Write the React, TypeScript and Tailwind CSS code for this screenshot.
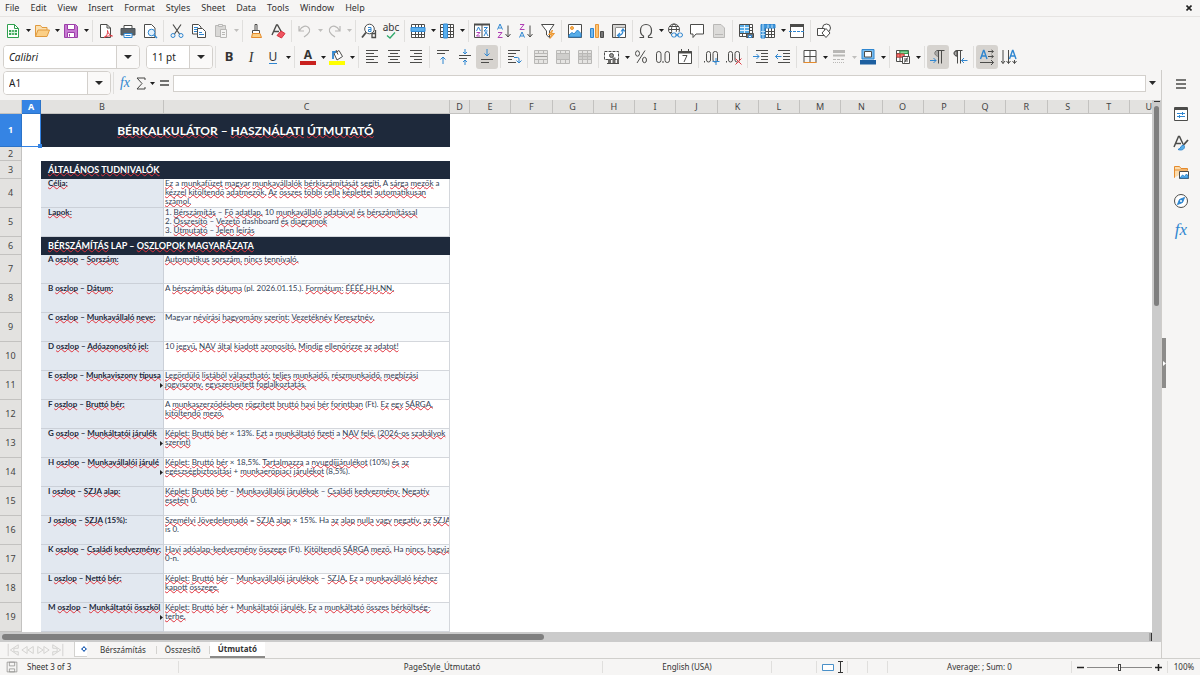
import React, { Fragment, ReactNode } from "react";

const INK = "#4c4c4a";
const BLUE = "#2f86d0";
const PURPLE = "#b03fb5";
const GREY = "#b9b8b6";

function Svg({ children, stroke = INK, size = 16 }: { children: ReactNode; stroke?: string; size?: number }) {
  return (
    <svg width={size} height={size} viewBox="0 0 16 16" fill="none" stroke={stroke} strokeWidth="1" aria-hidden="true" className="shrink-0">
      {children}
    </svg>
  );
}

const icons: Record<string, ReactNode> = {
  newDoc: (
    <Svg stroke="#2fa04e">
      <path d="M2.500 1.500h7l4 4v9h-11z" fill="#fff" />
      <path d="M9.500 1.500v4h4" />
      <path d="M4 7h8v5H4z" fill="#3aa757" stroke="none" />
      <path d="M4 9.500h8M6.700 7v5M9.300 7v5" stroke="#d9f2df" />
    </Svg>
  ),
  open: (
    <Svg stroke="#e09a3e">
      <path d="M1.500 13.500v-11h5l1.500 2h5v2.500" fill="#fbe0b0" />
      <path d="M1.500 13.500l2.500-6.500h11.500l-2.500 6.500z" fill="#fbcf86" />
    </Svg>
  ),
  save: (
    <Svg stroke="#9c3fa8">
      <path d="M1.500 1.500h11l2 2v11h-13z" fill="#c779d2" />
      <path d="M4.500 1.500h7v5h-7z" fill="#fff" />
      <path d="M4.500 9.500h7v5h-7z" fill="#fff" />
      <path d="M6.500 11v2.500" />
    </Svg>
  ),
  pdf: (
    <Svg>
      <path d="M2.500 1.500h6.500l3.500 3.500v9.500h-10z" fill="#fff" />
      <path d="M9 1.500v3.500h3.500" />
      <path d="M6 14.500c3-1.500 4-4.500 3.500-7 .5 3 2.500 5 5 5.500-3-.5-5.500 0-8.500 1.500z" stroke="#e23b45" />
    </Svg>
  ),
  print: (
    <Svg>
      <path d="M4 2.500h8v3H4z" fill="#fff" />
      <path d="M1 5.500h14v6.500H1z" fill="#5a6268" stroke="#4b5257" />
      <path d="M4 10.500h8v4H4z" fill="#fff" stroke={BLUE} />
      <path d="M5.500 12.500h5" stroke={BLUE} />
    </Svg>
  ),
  preview: (
    <Svg>
      <path d="M2.500 1.500h7l3.500 3.500v9.500h-10.500z" fill="#fff" />
      <circle cx="9.500" cy="9.500" r="3.300" fill="#e3f1fc" stroke={BLUE} />
      <path d="M12 12l3 3" stroke={BLUE} strokeWidth="1.400" />
    </Svg>
  ),
  cut: (
    <Svg>
      <path d="M4 1.500l6.500 9.500M12 1.500L5.500 11" strokeWidth="1.200" />
      <circle cx="4" cy="12.500" r="2" stroke={BLUE} />
      <circle cx="12" cy="12.500" r="2" stroke={BLUE} />
    </Svg>
  ),
  copy: (
    <Svg>
      <path d="M1.500 1.500h6l2.500 2.500v7h-8.500z" fill="#fff" />
      <path d="M6.500 5.500h5l3 3v6h-8z" fill="#fff" />
      <path d="M3 4.500h4M3 6.500h3M3 8.500h3M8 9.500h3M8 11.500h5" stroke={BLUE} />
    </Svg>
  ),
  paste: (
    <Svg stroke={GREY}>
      <path d="M2.500 2.500h10v11h-10z" fill="#d9d8d6" />
      <path d="M5.500 1.500h4v2h-4z" fill="#eee" />
      <path d="M7.500 6.500h6v8h-6z" fill="#f5f5f4" />
      <path d="M9 9.500h3M9 11.500h3" />
    </Svg>
  ),
  clone: (
    <Svg>
      <path d="M7 1.500h2v6H7z" />
      <path d="M4.500 7.500h7v3h-7z" fill="#fff" />
      <path d="M4.500 10.500l-1 4h10l-1.500-4z" fill="#fbcf86" stroke="#e58b2c" />
    </Svg>
  ),
  clear: (
    <Svg>
      <path d="M2 12L6.500 2h1L12 10M4 8.500h5" strokeWidth="1.400" />
      <path d="M7 12.500l4-4.500 4 2.500-3.500 4.500z" fill="#ef5661" stroke="#d8323f" />
    </Svg>
  ),
  undo: (
    <Svg stroke={GREY}>
      <path d="M2 3v5h5M2.500 7.500C5 3 9 2 11.500 4.500s1.500 5.500-4.500 9.500" strokeWidth="1.200" />
    </Svg>
  ),
  redo: (
    <Svg stroke={GREY}>
      <path d="M14 3v5H9M13.500 7.500C11 3 7 2 4.500 4.500s-1.500 5.500 4.500 9.500" strokeWidth="1.200" />
    </Svg>
  ),
  find: (
    <Svg>
      <circle cx="8.500" cy="6" r="4.800" fill="#fff" />
      <path d="M5 9.500L1 14.500" strokeWidth="1.800" />
      <path d="M7 4.500h3v4H7.500v-2H10" stroke={BLUE} />
      <path d="M14.500 7v7.500h-3.500v-4h3.500" strokeWidth="1.300" />
    </Svg>
  ),
  rowOp: (
    <Svg>
      <path d="M1.500 1.500h13v13h-13zM1.500 8.500h13M1.500 11.500h13M5.500 1.500v13M8.500 1.500v13M11.500 1.500v13" fill="#fff" />
      <path d="M1 4.500h14v4H1z" fill="#5ab0ee" stroke={BLUE} />
    </Svg>
  ),
  colOp: (
    <Svg>
      <path d="M1.500 1.500h13v13h-13zM1.500 4.500h13M1.500 8.500h13M1.500 11.500h13M11.500 1.500v13" fill="#fff" />
      <path d="M4.500 1v14h4V1z" fill="#5ab0ee" stroke={BLUE} />
    </Svg>
  ),
  sort: (
    <Svg>
      <path d="M.5 1.500h15v13H.5zM8 1.500v13" fill="#fff" />
      <path d="M0 1.500h16" strokeWidth="2" />
      <path d="M2.500 8L4.500 4l2 4M10 4.500h3.500L10 8h3.500" stroke={BLUE} />
      <path d="M2.500 9.500H6L2.500 13H6" stroke={PURPLE} />
      <path d="M10 13l2-4 2 4" stroke={BLUE} />
    </Svg>
  ),
  sortAsc: (
    <Svg>
      <path d="M1.500 6.500L4 1l2.500 5.500M2.500 5h3" stroke={BLUE} />
      <path d="M2 9.500h4L2 14.500h4.500" stroke={PURPLE} />
      <path d="M12 2.500v11M9.500 11l2.500 3 2.500-3" />
    </Svg>
  ),
  sortDesc: (
    <Svg>
      <path d="M2 1.500h4L2 6.500h4.500" stroke={PURPLE} />
      <path d="M1.500 14.500L4 9l2.500 5.500M2.500 13h3" stroke={BLUE} />
      <path d="M12 2.500v11M9.500 11l2.500 3 2.500-3" />
    </Svg>
  ),
  filter: (
    <Svg>
      <path d="M1.500 1.500h12.500L9.500 8v6.500L6.500 12V8z" fill="#fff" />
      <path d="M12.500 7L8.500 11.500h3l-1.500 4 4.500-5h-3z" fill="#fbb653" stroke="#e99535" />
    </Svg>
  ),
  image: (
    <Svg>
      <path d="M1.500 1.500h13v13h-13z" fill="#fff" />
      <circle cx="5" cy="5" r="1.500" fill="#fbb653" stroke="#e99535" />
      <path d="M2 14v-2l3-2.500 2 1.500 3.500-4L14 10.500V14z" fill="#58aee8" stroke={BLUE} />
    </Svg>
  ),
  chart: (
    <Svg>
      <path d="M1.500 5.500h3v9h-3z" fill="#73b9ee" stroke={BLUE} />
      <path d="M6.500 1.500h3v13h-3z" fill="#fbc476" stroke="#e99535" />
      <path d="M11.500 8.500h3v6h-3z" fill="#777" />
    </Svg>
  ),
  pivot: (
    <Svg>
      <path d="M1.500 1.500h13v13h-13zM1.500 4.500h13M4.500 1.500v13" fill="#fff" />
      <path d="M2 2h12v2.500H4.500V14H2z" fill="#d6d5d3" stroke="none" />
      <path d="M7 12.500c3 0 5-2 5-5.500M10 8.500L12 6l2 2.500M9 10l-2.500 2.500L9 14.500" stroke={BLUE} strokeWidth="1.200" />
    </Svg>
  ),
  omega: (
    <Svg>
      <path d="M1.500 14.500h4v-1.500C3.500 12 2.500 9.500 2.500 7.500 2.500 4 4.800 1.500 8 1.500s5.500 2.500 5.500 6c0 2-1 4.500-3 5.500v1.500h4" strokeWidth="1.200" />
    </Svg>
  ),
  link: (
    <Svg>
      <circle cx="7" cy="6.500" r="5.500" fill="#fff" />
      <ellipse cx="7" cy="6.500" rx="2.500" ry="5.500" />
      <path d="M1.500 6.500h11M2.500 3.500h9M2.500 9.500h9" />
      <path d="M5 9h10v6H5z" fill="#f6f5f4" stroke="none" />
      <rect x="4.500" y="10" width="5" height="4" rx="2" stroke={BLUE} />
      <rect x="10.500" y="10" width="5" height="4" rx="2" stroke={BLUE} />
      <path d="M8 12h4" stroke={BLUE} />
    </Svg>
  ),
  comment: (
    <Svg>
      <path d="M1.500 1.500h13v9.500H7l-3 3.500V11H1.500z" fill="#fff" />
    </Svg>
  ),
  header: (
    <Svg stroke={GREY}>
      <path d="M2.500 1.500h7.500l3.500 3.500v9.500h-11z" fill="#dcdbd9" />
      <path d="M4 11.500h8" />
    </Svg>
  ),
  printArea: (
    <Svg>
      <path d="M1.500 1.500h13v12h-13zM1.500 4.500h13M1.500 7.500h13M1.500 10.500h13M4.500 1.500v12M11.500 1.500v12" fill="#fff" />
      <path d="M2 2h9v8H2z" fill="#58aee8" stroke="none" />
      <path d="M2 4.500h9M2 7.500h9M6.500 2v8" stroke="#e3f1fc" />
      <path d="M8.500 10.500h7v4h-7z" fill="#64707a" />
      <path d="M10.500 12.500h3v2h-3z" fill="#fff" stroke={BLUE} />
    </Svg>
  ),
  freeze: (
    <Svg>
      <path d="M1.500 1.500h13v13h-13zM5.500 1.500v13M8.500 5v9.500M11.500 5v9.500M5 8.500h10M5 11.500h10" fill="#fff" />
      <path d="M1 1.500h14v3.500H5v10H1z" fill="#3f97dc" stroke={BLUE} />
      <path d="M3 1v14M8 1.500V5M12 1.500V5M1 8.500h4M1 11.500h4" stroke="#bfe0f7" />
    </Svg>
  ),
  split: (
    <Svg>
      <path d="M1.500 2.500h13v12h-13z" fill="#fff" />
      <path d="M1 2.500h14" strokeWidth="3" />
      <path d="M0 8.500h16" stroke={BLUE} strokeDasharray="3 1" />
    </Svg>
  ),
  shapes: (
    <Svg>
      <circle cx="10.500" cy="5" r="4" fill="#fff" />
      <path d="M1.500 5.500h7v7h-7z" fill="#fff" />
      <path d="M10 5.500l4 4.500-4 4.500L6 10z" fill="#fff" />
    </Svg>
  ),
  alignLeft: (
    <Svg>
      <path d="M2 1.500h12M2 4.500h8M2 7.500h12M2 10.500h8M2 13.500h12" />
    </Svg>
  ),
  alignCenter: (
    <Svg>
      <path d="M2 1.500h12M4 4.500h8M2 7.500h12M4 10.500h8M2 13.500h12" />
    </Svg>
  ),
  alignRight: (
    <Svg>
      <path d="M2 1.500h12M6 4.500h8M2 7.500h12M6 10.500h8M2 13.500h12" />
    </Svg>
  ),
  vTop: (
    <Svg>
      <path d="M2 1.500h12M2 4.500h8" />
      <path d="M8 15V8M5.500 10.500L8 8l2.500 2.500" stroke={BLUE} />
    </Svg>
  ),
  vMid: (
    <Svg>
      <path d="M2 6.500h12M2 9.500h8" />
      <path d="M8 0v5M6 3l2 2 2-2M8 16v-5M6 13l2-2 2 2" stroke={BLUE} />
    </Svg>
  ),
  vBottom: (
    <Svg>
      <path d="M2 10.500h12M2 13.500h8" />
      <path d="M8 0v7M5.500 4.500L8 7l2.500-2.500" stroke={BLUE} />
    </Svg>
  ),
  wrap: (
    <Svg>
      <path d="M2 1.500h12M2 4.500h8M2 7.500h6M2 10.500h4M2 13.500h8" />
      <path d="M8 8.500h3.500q1.500 0 1.500 1.500v4M10.500 11.500l2.500 2.500 2.500-2.500" stroke={BLUE} />
    </Svg>
  ),
  merge: (
    <Svg stroke={GREY}>
      <path d="M1.500 1.500h13v13h-13zM1.500 4.500h13M1.500 10.500h13M5.500 1.500v3M10.500 1.500v3M5.500 10.500v4M10.500 10.500v4" fill="#e6e5e3" />
      <path d="M2 7.500h12" stroke="#9f9e9c" />
    </Svg>
  ),
  mergeCells: (
    <Svg stroke={GREY}>
      <path d="M1.500 1.500h13v13h-13zM5.500 1.500v3M10.500 1.500v3M5.500 10.500v4M10.500 10.500v4" fill="#e6e5e3" />
      <path d="M1.500 4.500h13v6h-13z" fill="#cfcecc" />
    </Svg>
  ),
  unmerge: (
    <Svg stroke={GREY}>
      <path d="M1.500 1.500h13v13h-13zM5.500 1.500v13M10.500 1.500v13" fill="#e6e5e3" />
      <path d="M1.500 4.500h13v6h-13zM5.500 4.500v6M10.500 4.500v6M2 7.500h12" fill="#cfcecc" />
    </Svg>
  ),
  currency: (
    <Svg>
      <path d="M.5 2.500h14v8H.5z" fill="#fff" strokeDasharray="3 1" />
      <circle cx="7.500" cy="6.500" r="2" fill="#9b9a98" />
      <path d="M4 10h3v4H4zM8.500 8.500h3V14h-3zM13 10h2v4h-2z" fill="#6b6a68" stroke="none" />
      <path d="M3 14.500h12" />
    </Svg>
  ),
  percent: (
    <Svg>
      <ellipse cx="4.500" cy="4.500" rx="2" ry="2.700" />
      <ellipse cx="11.500" cy="11" rx="2" ry="2.700" />
      <path d="M12 1.500L4 14" />
    </Svg>
  ),
  number: (
    <Svg>
      <rect x="1.500" y="2.500" width="4.500" height="11" rx="2.250" />
      <rect x="10" y="2.500" width="4.500" height="11" rx="2.250" />
      <path d="M8 12v2" />
    </Svg>
  ),
  date: (
    <Svg>
      <path d="M1.500 2.500h13v12h-13z" fill="#fff" />
      <path d="M1 3.500h14" strokeWidth="2" />
      <path d="M4.500 0v3M11.500 0v3M5.500 6.500h4.500L7 13" />
    </Svg>
  ),
  addDec: (
    <Svg>
      <path d="M.5 12v1.500" />
      <rect x="2.500" y="2.500" width="4" height="10.500" rx="2" />
      <rect x="9" y="2.500" width="4.500" height="10.500" rx="2" />
      <path d="M8.500 12.500h7M12 9v7" stroke={BLUE} />
    </Svg>
  ),
  delDec: (
    <Svg>
      <path d="M.5 12v1.500" />
      <rect x="2.500" y="2.500" width="4" height="10.500" rx="2" />
      <rect x="9" y="2.500" width="4.500" height="10.500" rx="2" />
      <path d="M9.500 9.500l6 6M15.500 9.500l-6 6" stroke="#e23b45" />
    </Svg>
  ),
  indent: (
    <Svg>
      <path d="M3 1.500h12M8 4.500h7M8 7.500h7M8 10.500h7M3 13.500h12" />
      <path d="M0 7.500h6M3.500 5L6 7.500 3.500 10" stroke={BLUE} />
    </Svg>
  ),
  outdent: (
    <Svg>
      <path d="M3 1.500h12M8 4.500h7M8 7.500h7M8 10.500h7M3 13.500h12" />
      <path d="M6.500 7.500h-6M3 5L.5 7.500 3 10" stroke={BLUE} />
    </Svg>
  ),
  borders: (
    <Svg>
      <path d="M2 1.500h12v6H2zM8 1.500v12M2 7.500v6M14 7.500v6" fill="#fff" />
      <path d="M1.500 13.500h13" stroke="#e58b2c" />
    </Svg>
  ),
  borderStyle: (
    <Svg stroke={GREY}>
      <path d="M2 2.500h12" strokeWidth="3" />
      <path d="M2 6.500h12" strokeWidth="2" />
      <path d="M2 10.500h12" strokeDasharray="3 1" />
      <path d="M2 13.500h12" strokeDasharray="1 1" />
    </Svg>
  ),
  borderColor: (
    <Svg>
      <path d="M2 .5h12v9.500H2z" fill="#79bdf0" stroke={BLUE} />
      <path d="M4.500 2.500h7v5.500h-7z" fill="#fff" />
      <path d="M0 11h16v4.500H0z" fill="#1d5fa0" stroke="none" />
    </Svg>
  ),
  conditional: (
    <Svg>
      <path d="M1.500 1.500h12v11h-12zM5 1.500v11M9 1.500v11M1.500 4.500h12M1.500 8h12" fill="#fff" />
      <path d="M5 2h8v2.500H5z" fill="#8ed49e" stroke="#2fa04e" />
      <path d="M2 5h3v3H2zM5 5h4v3H5z" fill="#f3837f" stroke="#d8423f" />
      <path d="M7.500 7.500h7v7h-7z" fill="#fff" />
      <path d="M9 10h4M9 12h4M12.500 8.500l-3 5" />
    </Svg>
  ),
  ltr: (
    <Svg>
      <path d="M14.500 1.500H8C4 1.500 4 7 8 7M8.500 1.500v13M11.500 1.500v13" />
      <path d="M8 2v5C4.500 7 4.500 2 8 2z" fill="#aaa9a7" stroke="none" />
      <path d="M0 11.500h6M3.500 9L6 11.500 3.500 14" stroke={BLUE} />
    </Svg>
  ),
  rtl: (
    <Svg>
      <path d="M10.500 1.500H5C1 1.500 1 7 5 7M5.500 1.500v13M8.500 1.500v13" />
      <path d="M5 2v5C1.500 7 1.500 2 5 2z" fill="#aaa9a7" />
      <path d="M15.500 11.500h-6M12 9l-2.500 2.500L12 14" stroke={BLUE} />
    </Svg>
  ),
  textLtr: (
    <Svg>
      <path d="M1.500 10L4.500 1.500h.5L8 10M2.500 7h4.500" stroke={BLUE} strokeWidth="1.400" />
      <path d="M9 2.500h5M12.500 1l2 1.500-2 1.500M9 7.500h5M12.500 6l2 1.500-2 1.500M1 13.500h13.500M12 11l2.500 2.500L12 16" />
    </Svg>
  ),
  textTtb: (
    <Svg>
      <path d="M8.500 10l3-8.500h.5L15 10M9.500 7H14" stroke={BLUE} strokeWidth="1.400" />
      <path d="M2 1v13.500M0 12l2 2.500L4 12M7.500 1v13.500M5.500 12l2 2.500 2-2.500M13.500 11v3.500M11.500 12l2 2.500 2-2.500" />
    </Svg>
  ),
};

function Btn({ label, active, disabled, children }: { label: string; active?: boolean; disabled?: boolean; children: ReactNode }) {
  return (
    <button
      type="button"
      aria-label={label}
      disabled={disabled}
      className={
        active
          ? "flex h-6 w-[22px] shrink-0 items-center justify-center rounded-[3px] bg-[#d6d3cf]"
          : "flex h-6 w-[22px] shrink-0 items-center justify-center"
      }
    >
      {children}
    </button>
  );
}

function Caret({ muted }: { muted?: boolean }) {
  return (
    <svg width="5" height="3" viewBox="0 0 5 3" aria-hidden="true" className="shrink-0">
      <path d="M0 0h5L2.500 3z" fill={muted ? "#c0bfbd" : "#1e1e1e"} />
    </svg>
  );
}

function Drop({ label, muted }: { label: string; muted?: boolean }) {
  return (
    <button type="button" aria-label={label + " options"} disabled={muted} className="flex h-6 w-[7px] shrink-0 items-center justify-end">
      <Caret muted={muted} />
    </button>
  );
}

function Sep({ wide }: { wide?: boolean }) {
  return (
    <span className={wide ? "flex h-[22px] w-[6px] shrink-0 justify-center" : "flex h-[22px] w-[5px] shrink-0 justify-center"}>
      <span className="w-px bg-[#e0dfdd]" />
    </span>
  );
}

type Tool = { id: string; label: string; drop?: boolean; off?: boolean; on?: boolean };
const t = (id: string, label: string, flags = ""): Tool => ({
  id,
  label,
  drop: flags.includes("v"),
  off: flags.includes("x"),
  on: flags.includes("a"),
});

const standardBar: Tool[][] = [
  [t("newDoc", "New", "v"), t("open", "Open", "v"), t("save", "Save", "v")],
  [t("pdf", "Export as PDF"), t("print", "Print"), t("preview", "Print Preview")],
  [t("cut", "Cut"), t("copy", "Copy"), t("paste", "Paste", "vx")],
  [t("clone", "Clone Formatting"), t("clear", "Clear Formatting")],
  [t("undo", "Undo", "vx"), t("redo", "Redo", "vx")],
  [t("find", "Find and Replace"), t("spell", "Spelling")],
  [t("rowOp", "Row", "v"), t("colOp", "Column", "v")],
  [t("sort", "Sort"), t("sortAsc", "Sort Ascending"), t("sortDesc", "Sort Descending"), t("filter", "AutoFilter")],
  [t("image", "Insert Image"), t("chart", "Insert Chart"), t("pivot", "Pivot Table")],
  [t("omega", "Special Character", "v"), t("link", "Hyperlink"), t("comment", "Comment"), t("header", "Headers and Footers", "x")],
  [t("printArea", "Print Area"), t("freeze", "Freeze Rows and Columns", "v"), t("split", "Split Window")],
  [t("shapes", "Show Draw Functions")],
];

const formatBar: Tool[][] = [
  [t("bold", "Bold"), t("italic", "Italic"), t("underline", "Underline", "v")],
  [t("fontColor", "Font Color", "v"), t("fill", "Background Color", "v")],
  [t("alignLeft", "Align Left"), t("alignCenter", "Align Center"), t("alignRight", "Align Right")],
  [t("vTop", "Align Top"), t("vMid", "Center Vertically"), t("vBottom", "Align Bottom", "a")],
  [t("wrap", "Wrap Text")],
  [t("merge", "Merge and Center", "x"), t("mergeCells", "Merge Cells", "x"), t("unmerge", "Unmerge Cells", "x")],
  [t("currency", "Currency", "v"), t("percent", "Percent"), t("number", "Number"), t("date", "Date")],
  [t("addDec", "Add Decimal Place"), t("delDec", "Delete Decimal Place")],
  [t("indent", "Increase Indent"), t("outdent", "Decrease Indent")],
  [t("borders", "Borders", "v"), t("borderStyle", "Border Style", "vx"), t("borderColor", "Border Color", "v")],
  [t("conditional", "Conditional", "v")],
  [t("ltr", "Left-To-Right", "a"), t("rtl", "Right-To-Left")],
  [t("textLtr", "Text left to right", "a"), t("textTtb", "Text top to bottom")],
];

function Glyph({ id }: { id: string }) {
  switch (id) {
    case "bold":
      return <span className="text-[13px] font-bold text-[#333]">B</span>;
    case "italic":
      return <span className="font-['Liberation_Serif',serif] text-[14px] italic text-[#333]">I</span>;
    case "underline":
      return <span className="border-b border-[#2f86d0] text-[12px] leading-[13px] text-[#333]">U</span>;
    case "spell":
      return (
        <span className="flex flex-col items-center">
          <span className="text-[10px] leading-[9px] text-[#333]">abc</span>
          <svg width="10" height="7" viewBox="0 0 10 7" fill="none" stroke="#2fa96b" strokeWidth="1.300" aria-hidden="true">
            <path d="M1 3.500L4 6l5-5.500" />
          </svg>
        </span>
      );
    case "fontColor":
      return (
        <span className="flex flex-col items-center">
          <span className="text-[12px] font-bold leading-3 text-[#333]">A</span>
          <span className="h-1 w-4 bg-[#c9211e]" />
        </span>
      );
    case "fill":
      return (
        <Svg>
          <path d="M5 4.500l5-3 3.500 6-5.500 3.500z" fill="#fff" />
          <path d="M7 1l2 4.500" />
          <path d="M4 10V3h3" stroke={BLUE} strokeWidth="1.800" />
          <path d="M0 12h16v4H0z" fill="#ffff00" stroke="none" />
        </Svg>
      );
    default:
      return <>{icons[id]}</>;
  }
}

function ToolGroups({ groups }: { groups: Tool[][] }) {
  return (
    <>
      {groups.map((group, i) => (
        <Fragment key={i}>
          {i > 0 && <Sep wide={groups[i - 1][groups[i - 1].length - 1].drop} />}
          {group.map((tool) => (
            <Fragment key={tool.id}>
              <Btn label={tool.label} active={tool.on} disabled={tool.off}>
                <Glyph id={tool.id} />
              </Btn>
              {tool.drop && <Drop label={tool.label} muted={tool.off} />}
            </Fragment>
          ))}
        </Fragment>
      ))}
    </>
  );
}

function Combo({ id, label, value, box, text }: { id: string; label: string; value: string; box: string; text: string }) {
  return (
    <div className={"flex h-6 shrink-0 overflow-hidden rounded-[4px] border border-[#d3d0cc] bg-white " + box}>
      <input id={id} aria-label={label} defaultValue={value} className={"min-w-0 flex-1 bg-white px-[5px] text-[10px] text-[#222] outline-none " + text} />
      <button type="button" aria-label={label + " list"} className="flex w-[23px] shrink-0 items-center justify-center border-l border-[#d3d0cc] bg-[#faf9f8]">
        <svg width="8" height="4" viewBox="0 0 8 4" aria-hidden="true">
          <path d="M0 0h8L4 4z" fill="#2a2a2a" />
        </svg>
      </button>
    </div>
  );
}

const KNOWN = new Set(["Magyar", "dashboard", "(pl.", "(Ft).", "Ha", "is", "LAP", "0-n."]);

function Spelled({ text }: { text: string }) {
  return (
    <>
      {text.split(" ").map((word, i) => {
        const wrong = /[A-Za-zÀ-ž]{2,}/.test(word) && !KNOWN.has(word);
        return (
          <Fragment key={i}>
            {i > 0 && " "}
            {wrong ? (
              <span className="underline decoration-[#e0323c] decoration-wavy decoration-1 -underline-offset-1 [text-decoration-skip-ink:none]">{word}</span>
            ) : (
              word
            )}
          </Fragment>
        );
      })}
    </>
  );
}

type Row = { n: number; kind: "title" | "gap" | "section" | "data"; b?: string; c?: string[]; cut?: boolean };
const rows: Row[] = [
  { n: 1, kind: "title", b: "BÉRKALKULÁTOR – HASZNÁLATI ÚTMUTATÓ" },
  { n: 2, kind: "gap" },
  { n: 3, kind: "section", b: "ÁLTALÁNOS TUDNIVALÓK" },
  {
    n: 4,
    kind: "data",
    b: "Célja:",
    c: ["Ez a munkafüzet magyar munkavállalók bérkiszámítását segíti. A sárga mezők a", "kézzel kitöltendő adatmezők. Az összes többi cella képlettel automatikusan", "számol."],
  },
  { n: 5, kind: "data", b: "Lapok:", c: ["1. Bérszámítás – Fő adatlap, 10 munkavállaló adataival és bérszámítással", "2. Összesítő – Vezető dashboard és diagramok", "3. Útmutató – Jelen leírás"] },
  { n: 6, kind: "section", b: "BÉRSZÁMÍTÁS LAP – OSZLOPOK MAGYARÁZATA" },
  { n: 7, kind: "data", b: "A oszlop – Sorszám:", c: ["Automatikus sorszám, nincs tennivaló."] },
  { n: 8, kind: "data", b: "B oszlop – Dátum:", c: ["A bérszámítás dátuma (pl. 2026.01.15.). Formátum: ÉÉÉÉ.HH.NN."] },
  { n: 9, kind: "data", b: "C oszlop – Munkavállaló neve:", c: ["Magyar névírási hagyomány szerint: Vezetéknév Keresztnév."] },
  { n: 10, kind: "data", b: "D oszlop – Adóazonosító jel:", c: ["10 jegyű, NAV által kiadott azonosító. Mindig ellenőrizze az adatot!"] },
  { n: 11, kind: "data", cut: true, b: "E oszlop – Munkaviszony típusa", c: ["Legördülő listából választható: teljes munkaidő, részmunkaidő, megbízási", "jogviszony, egyszerűsített foglalkoztatás."] },
  { n: 12, kind: "data", b: "F oszlop – Bruttó bér:", c: ["A munkaszerződésben rögzített bruttó havi bér forintban (Ft). Ez egy SÁRGA,", "kitöltendő mező."] },
  { n: 13, kind: "data", cut: true, b: "G oszlop – Munkáltatói járulék", c: ["Képlet: Bruttó bér × 13%. Ezt a munkáltató fizeti a NAV felé. (2026-os szabályok", "szerint)"] },
  { n: 14, kind: "data", cut: true, b: "H oszlop – Munkavállalói járulé", c: ["Képlet: Bruttó bér × 18,5%. Tartalmazza a nyugdíjjárulékot (10%) és az", "egészségbiztosítási + munkaerőpiaci járulékot (8,5%)."] },
  { n: 15, kind: "data", b: "I oszlop – SZJA alap:", c: ["Képlet: Bruttó bér – Munkavállalói járulékok – Családi kedvezmény. Negatív", "esetén 0."] },
  { n: 16, kind: "data", b: "J oszlop – SZJA (15%):", c: ["Személyi Jövedelemadó = SZJA alap × 15%. Ha az alap nulla vagy negatív, az SZJA", "is 0."] },
  { n: 17, kind: "data", b: "K oszlop – Családi kedvezmény:", c: ["Havi adóalap-kedvezmény összege (Ft). Kitöltendő SÁRGA mező. Ha nincs, hagyja", "0-n."] },
  { n: 18, kind: "data", b: "L oszlop – Nettó bér:", c: ["Képlet: Bruttó bér – Munkavállalói járulékok – SZJA. Ez a munkavállaló kézhez", "kapott összege."] },
  { n: 19, kind: "data", cut: true, b: "M oszlop – Munkáltatói összköl", c: ["Képlet: Bruttó bér + Munkáltatói járulék. Ez a munkáltató összes bérköltség-", "terhe."] },
];

const heights: Record<number, string> = { 1: "h-[33px]", 2: "h-[14px]", 3: "h-[18px]", 6: "h-[18px]" };
const columns = "E F G H I J K L M N O P Q R S T".split(" ");

function HeadCell({ children, className = "" }: { children?: ReactNode; className?: string }) {
  return <th className={"h-[14px] overflow-hidden border-b border-r border-[#c3c2c0] bg-[#e3e2e0] p-0 text-center text-[9px] leading-[13px] font-normal text-[#444] " + className}>{children}</th>;
}

function Sheet() {
  return (
    <table className="w-full table-fixed border-separate border-spacing-0">
      <colgroup>
        <col className="w-[22px]" />
        <col className="w-[19px]" />
        <col className="w-[123px]" />
        <col className="w-[286px]" />
        <col className="w-[20px]" />
        {columns.map((c) => (
          <col key={c} />
        ))}
        <col className="w-[22px]" />
      </colgroup>
      <thead>
        <tr>
          <HeadCell />
          <th className="border-b border-r border-[#2b73c8] bg-[#3584e4] p-0 text-center text-[9px] leading-[13px] font-bold text-white">A</th>
          <HeadCell>B</HeadCell>
          <HeadCell>C</HeadCell>
          <HeadCell>D</HeadCell>
          {columns.map((c) => (
            <HeadCell key={c}>{c}</HeadCell>
          ))}
          <HeadCell className="border-r-0 text-right">U</HeadCell>
        </tr>
      </thead>
      <tbody>
        {rows.map((row) => {
          const height = heights[row.n] ?? "h-[29px]";
          const shade = row.n === 4 || (row.n > 6 && row.n % 2 === 0) ? "bg-white" : "bg-[#f8fafc]";
          return (
            <tr key={row.n} className={height}>
              <th
                className={
                  row.n === 1
                    ? "border-b border-r border-[#2b73c8] bg-[#3584e4] p-0 text-center text-[9px] leading-3 font-bold text-white"
                    : "border-b border-r border-[#c3c2c0] bg-[#e3e2e0] p-0 text-center text-[9px] leading-3 font-normal text-[#444]"
                }
              >
                {row.n}
              </th>
              {row.n === 1 ? (
                <td className="relative border-b border-r border-[#3584e4] bg-white p-0">
                  <span className="absolute -bottom-[2px] -right-[2px] z-10 size-[4px] bg-[#3584e4]" />
                </td>
              ) : (
                <td className="bg-white p-0" />
              )}
              {row.kind === "title" && (
                <td colSpan={2} className="overflow-hidden bg-[#1e293b] p-0 text-center font-['Lato',sans-serif] text-[12px] leading-4 font-bold whitespace-nowrap text-white">
                  <Spelled text={row.b!} />
                </td>
              )}
              {row.kind === "gap" && <td colSpan={2} className="bg-white p-0" />}
              {row.kind === "section" && (
                <td colSpan={2} className="overflow-hidden bg-[#1e293b] p-0 pl-[7px] text-left font-['Lato',sans-serif] text-[9px] leading-4 font-bold whitespace-nowrap text-white">
                  <Spelled text={row.b!} />
                </td>
              )}
              {row.kind === "data" && (
                <>
                  <td className="relative overflow-hidden border-b border-r border-[#cbd0d8] bg-[#e2e8f0] p-0 pl-[7px] align-top font-['Lato',sans-serif] text-[8px] leading-[9px] font-bold whitespace-nowrap text-[#1e293b]">
                    <Spelled text={row.b!} />
                    {row.cut && (
                      <svg width="3" height="5" viewBox="0 0 3 5" aria-hidden="true" className="absolute right-0 bottom-[11px]">
                        <path d="M0 0l3 2.500L0 5z" fill="#222" />
                      </svg>
                    )}
                  </td>
                  <td className={"overflow-hidden border-b border-r border-[#d4d7dc] p-0 pl-px align-top font-['Lato',sans-serif] text-[8px] leading-[9px] whitespace-nowrap text-[#334155] " + shade}>
                    {row.c!.map((line) => (
                      <div key={line}>
                        <Spelled text={line} />
                      </div>
                    ))}
                  </td>
                </>
              )}
              <td colSpan={18} className="bg-white p-0" />
            </tr>
          );
        })}
      </tbody>
    </table>
  );
}

function FxMark({ big }: { big?: boolean }) {
  return (
    <span className={big ? "font-['Liberation_Serif',serif] text-[17px] leading-5 italic text-[#2f86d0]" : "font-['Liberation_Serif',serif] text-[14px] leading-5 italic text-[#2f86d0]"}>
      fx
    </span>
  );
}

function Sidebar() {
  const items: [string, ReactNode][] = [
    ["Sidebar Settings", <Svg key="s"><path d="M3 3h10M3 7h10M3 11h10" strokeWidth="1.500" /></Svg>],
    [
      "Properties",
      <Svg key="p">
        <path d="M1.500 1.500h13v13h-13z" fill="#fff" />
        <path d="M1 3h14" strokeWidth="2" />
        <path d="M4 7.500h8M4 10.500h8M9.500 6v3M6.500 9v3" stroke={BLUE} />
      </Svg>,
    ],
    [
      "Styles",
      <Svg key="y">
        <path d="M1 12L5.500 1.500h1L10 9M3 8.500h5" strokeWidth="1.500" />
        <path d="M15 5l-5 5.500" strokeWidth="1.800" />
        <path d="M10.500 10c-3 0-2 3.500-5.500 4.500 3 1 6.500.5 6.500-3z" fill="#58aee8" stroke={BLUE} />
      </Svg>,
    ],
    [
      "Gallery",
      <Svg key="g">
        <path d="M1.500 13.500v-11h5l1.500 2h6.500v2" fill="#fbdcae" stroke="#e58b2c" />
        <path d="M1.500 13.500V6h13" stroke="#e58b2c" />
        <path d="M6.500 7.500h9v7h-9z" fill="#fff" />
        <path d="M7 14l2.500-3 2 1.500 2-2.500 1.500 2V14z" fill="#58aee8" stroke={BLUE} />
      </Svg>,
    ],
    [
      "Navigator",
      <Svg key="n">
        <circle cx="8" cy="8" r="6.500" fill="#fff" />
        <path d="M11.500 4.500L9.500 9.500l-5 2 2-5z" fill="#2f86d0" stroke={BLUE} />
        <circle cx="8" cy="8" r="1" fill="#fff" stroke="none" />
      </Svg>,
    ],
    ["Functions", <FxMark key="f" big />],
  ];
  return (
    <aside className="flex w-[39px] shrink-0 border-l border-[#cfcdca] bg-[#f6f5f4]">
      <div className="flex w-1 items-start pt-[268px]">
        <span className="flex h-[50px] w-1 items-center justify-center bg-[#8d8c8a]">
          <svg width="3" height="5" viewBox="0 0 3 5" aria-hidden="true">
            <path d="M0 0l3 2.500L0 5z" fill="#fff" />
          </svg>
        </span>
      </div>
      <nav aria-label="Sidebar" className="flex flex-1 flex-col items-center pr-1">
        {items.map(([label, icon]) => (
          <button key={label} type="button" aria-label={label} className="flex h-[29px] w-7 items-center justify-center">
            {icon}
          </button>
        ))}
      </nav>
    </aside>
  );
}

function SheetTabs() {
  return (
    <div className="flex h-4 shrink-0 items-stretch text-[8px] leading-[14px] text-[#333]">
      <div className="flex items-center pl-[5px]">
        {["M2.500 1v14M14 2L5 8l9 6v-4H9V6h5z", "M14 4L8 8l6 4zM7 4L1 8l6 4z", "M2 4l6 4-6 4zM9 4l6 4-6 4z", "M13.500 1v14M2 2l9 6-9 6v-4h5V6H2z"].map((d, i) => (
          <button key={d} type="button" aria-label={["First sheet", "Previous sheet", "Next sheet", "Last sheet"][i]} className="flex w-[15px] justify-center">
            <Svg stroke="#cfcecb" size={14}>
              <path d={d} />
            </Svg>
          </button>
        ))}
      </div>
      <button type="button" aria-label="Add sheet" className="ml-[9px] flex h-[15px] w-[13px] items-center justify-end border border-t-0 border-r-0 border-[#d3d2cf] bg-white">
        <svg width="6" height="6" viewBox="0 0 6 6" fill="none" stroke="#2b67b8" className="shrink-0" aria-hidden="true">
          <path d="M3 0v1.500M3 4.500V6M0 3h1.500M4.500 3H6" />
          <circle cx="3" cy="3" r="1.700" />
        </svg>
      </button>
      <button type="button" className="ml-[3px] px-[10px]">Bérszámítás</button>
      <span className="my-1 w-px bg-[#d3d2cf]" />
      <button type="button" className="px-2">Összesítő</button>
      <span className="my-1 w-px bg-[#d3d2cf]" />
      <button type="button" className="border-b-2 border-[#8b8a88] bg-white px-2 font-bold">Útmutató</button>
    </div>
  );
}

export default function App() {
  return (
    <div className="flex h-screen flex-col overflow-hidden bg-[#f6f5f4] font-['Noto_Sans',sans-serif] text-[#333]">
      <header className="flex h-[17px] shrink-0 items-center border-b border-[#e6e4e2] pr-[6px] pl-[5px]">
        <nav aria-label="Menu" className="flex flex-1 gap-[11px] text-[9px] leading-4">
          {["File", "Edit", "View", "Insert", "Format", "Styles", "Sheet", "Data", "Tools", "Window", "Help"].map((m) => (
            <button key={m} type="button">
              {m}
            </button>
          ))}
        </nav>
        <button type="button" aria-label="Close document" className="flex size-[10px] items-center justify-center">
          <svg width="6" height="6" viewBox="0 0 6 6" stroke="#222" strokeWidth="1.600" aria-hidden="true">
            <path d="M.5.5l5 5M5.500.5l-5 5" />
          </svg>
        </button>
      </header>

      <div role="toolbar" aria-label="Standard" className="flex h-[27px] shrink-0 items-center pl-[2px]">
        <ToolGroups groups={standardBar} />
      </div>

      <div role="toolbar" aria-label="Formatting" className="flex h-[26px] shrink-0 items-center pl-[3px]">
        <Combo id="font-name" label="Font Name" value="Calibri" box="w-[137px]" text="italic" />
        <span className="w-[6px] shrink-0" />
        <Combo id="font-size" label="Font Size" value="11 pt" box="w-[67px]" text="" />
        <Sep />
        <ToolGroups groups={formatBar} />
      </div>

      <div className="flex min-h-0 flex-1">
        <main className="flex min-w-0 flex-1 flex-col">
          <div className="flex h-[30px] shrink-0 items-center pr-[3px] pb-1 pl-[3px]">
            <Combo id="name-box" label="Name Box" value="A1" box="w-[108px]" text="" />
            <Sep />
            <button type="button" aria-label="Function Wizard" className="ml-[2px] flex w-[14px] justify-center">
              <FxMark />
            </button>
            <button type="button" aria-label="Select Function" className="flex w-[18px] items-center justify-center">
              <svg width="10" height="13" viewBox="0 0 10 13" fill="none" stroke="#454543" aria-hidden="true">
                <path d="M9 3V1H1l5 5.500L1 12h8v-2" />
              </svg>
            </button>
            <Caret />
            <button type="button" aria-label="Formula" className="flex w-[18px] items-center justify-center">
              <svg width="9" height="6" viewBox="0 0 9 6" stroke="#454543" strokeWidth="1.400" aria-hidden="true">
                <path d="M0 1h9M0 5h9" />
              </svg>
            </button>
            <input aria-label="Input line" className="h-[17px] min-w-0 flex-1 border border-[#d3d0cc] bg-white px-1 text-[9px] outline-none" />
            <button type="button" aria-label="Expand Formula Bar" className="flex w-[12px] shrink-0 items-center justify-center">
              <svg width="7" height="4" viewBox="0 0 7 4" aria-hidden="true">
                <path d="M0 0h7L3.500 4z" fill="#2a2a2a" />
              </svg>
            </button>
          </div>
          <div className="flex min-h-0 flex-1">
            <div className="min-w-0 flex-1 overflow-hidden bg-white">
              <Sheet />
            </div>
            <div className="flex w-[9px] shrink-0 flex-col items-center bg-[#cbcbcb]">
              <span className="mt-px h-px w-[6px] bg-[#333]" />
              <span className="mt-1 h-[200px] w-[5px] rounded-full bg-[#7f7f7f]" />
            </div>
          </div>
          <div className="flex h-[10px] shrink-0 items-center bg-[#cbcbcb] pr-[9px] pl-[2px]">
            <span className="h-[6px] w-[542px] rounded-full bg-[#7f7f7f]" />
            <span className="ml-auto h-2 w-[3px] border-r border-[#333] bg-[#a5a5a5]" />
          </div>
          <SheetTabs />
        </main>
        <Sidebar />
      </div>

      <footer className="flex h-[17px] shrink-0 items-center border-t border-[#d0cfcc] text-[8px] leading-4">
        <span className="flex w-6 justify-center">
          <Svg stroke="#8f8e8c" size={12}>
            <path d="M1.500 1.500h13v13h-13zM4.500 1.500h7v5h-7zM4.500 10.500h7v4h-7z" />
          </Svg>
        </span>
        <span className="w-[154px] pl-[3px]">Sheet 3 of 3</span>
        <span className="h-3 w-px bg-[#e0dfdd]" />
        <span className="flex-1 pl-[103px] text-center">PageStyle_Útmutató</span>
        <span className="h-3 w-px bg-[#e0dfdd]" />
        <span className="w-[168px] text-center">English (USA)</span>
        <span className="h-3 w-px bg-[#e0dfdd]" />
        <span className="w-[44px]" />
        <span className="h-3 w-px bg-[#e0dfdd]" />
        <span className="flex w-[30px] items-center justify-center gap-1">
          <svg width="12" height="7" viewBox="0 0 12 7" fill="#fff" stroke="#4a90c8" aria-hidden="true">
            <path d="M.5.5h11v6H.5z" />
          </svg>
          <svg width="5" height="12" viewBox="0 0 5 12" fill="none" stroke="#333" aria-hidden="true">
            <path d="M0 .5h5M2.500 .5v11M0 11.500h5" />
          </svg>
        </span>
        <span className="mr-[19px] h-3 w-px bg-[#e0dfdd]" />
        <span className="mr-[19px] h-3 w-px bg-[#e0dfdd]" />
        <span className="h-3 w-px bg-[#e0dfdd]" />
        <span className="w-[183px] text-center">Average: ; Sum: 0</span>
        <span className="h-3 w-px bg-[#e0dfdd]" />
        <div className="flex w-[95px] items-center justify-center gap-[3px]">
          <button type="button" aria-label="Zoom Out">
            <svg width="7" height="7" viewBox="0 0 7 7" stroke="#222" strokeWidth="1.500" aria-hidden="true">
              <path d="M0 3.500h7" />
            </svg>
          </button>
          <input
            type="range"
            aria-label="Zoom"
            defaultValue={50}
            className="h-2 w-[65px] appearance-none bg-[linear-gradient(#8a8988,#8a8988)] bg-[length:100%_1px] bg-center bg-no-repeat [&::-webkit-slider-thumb]:h-[7px] [&::-webkit-slider-thumb]:w-[3px] [&::-webkit-slider-thumb]:appearance-none [&::-webkit-slider-thumb]:border [&::-webkit-slider-thumb]:border-[#444] [&::-webkit-slider-thumb]:bg-white"
          />
          <button type="button" aria-label="Zoom In">
            <svg width="7" height="7" viewBox="0 0 7 7" stroke="#222" strokeWidth="1.500" aria-hidden="true">
              <path d="M0 3.500h7M3.500 0v7" />
            </svg>
          </button>
        </div>
        <span className="h-3 w-px bg-[#e0dfdd]" />
        <span className="w-8 text-center">100%</span>
      </footer>
    </div>
  );
}
